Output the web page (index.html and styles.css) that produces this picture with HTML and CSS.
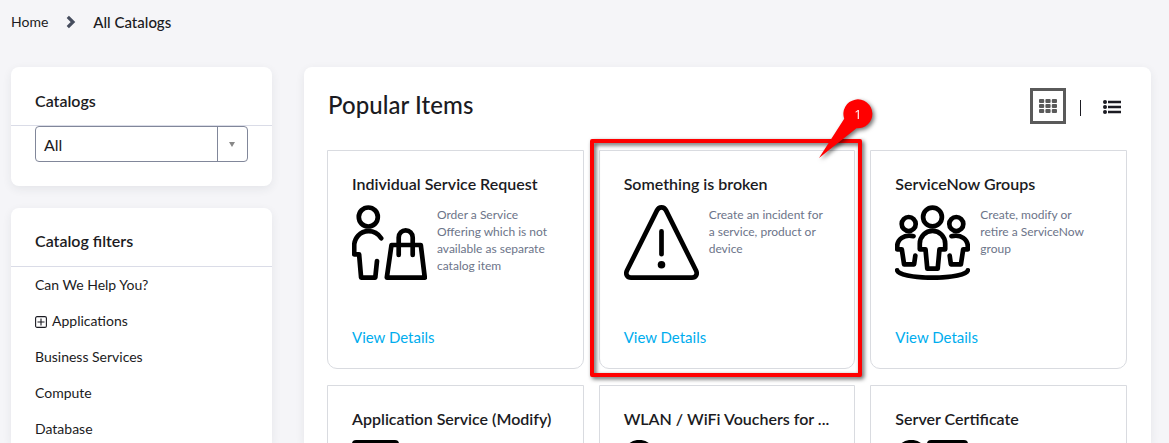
FILE: index.html
```html
<!DOCTYPE html>
<html lang="en">
<head>
<meta charset="utf-8">
<title>All Catalogs</title>
<link rel="stylesheet" href="styles.css">
</head>
<body>
<nav class="breadcrumb">
  <a class="crumb">Home</a>
  <svg class="crumb-arrow" width="10" height="14" viewBox="0 0 10 14"><path d="M1.8 1.8l5.2 5.2-5.2 5.2"/></svg>
  <span class="crumb-current">All Catalogs</span>
</nav>
<div class="layout">
  <aside class="sidebar">
    <section class="panel catalogs">
      <h2 class="panel-title">Catalogs</h2>
      <div class="select"><span class="select-value">All</span><span class="select-toggle"><svg width="6" height="5" viewBox="0 0 6 5"><path d="M0 0h6L3 5z"/></svg></span></div>
    </section>
    <section class="panel filters">
      <h2 class="panel-title">Catalog filters</h2>
      <ul class="filter-list">
        <li>Can We Help You?</li>
        <li><svg class="expand" width="12" height="12" viewBox="0 0 12 12"><rect x=".6" y=".6" width="10.8" height="10.8" rx="1.5"/><path d="M6 2.5v7M2.5 6h7"/></svg>Applications</li>
        <li>Business Services</li>
        <li>Compute</li>
        <li>Database</li>
      </ul>
    </section>
  </aside>
  <main class="panel popular">
    <header class="popular-head">
      <h1 class="popular-title">Popular Items</h1>
      <div class="views">
        <span class="view-grid"><svg width="18" height="14" viewBox="0 0 18 14"><g><rect width="5.2" height="4" rx="1"/><rect x="6.4" width="5.2" height="4" rx="1"/><rect x="12.8" width="5.2" height="4" rx="1"/><rect y="5" width="5.2" height="4" rx="1"/><rect x="6.4" y="5" width="5.2" height="4" rx="1"/><rect x="12.8" y="5" width="5.2" height="4" rx="1"/><rect y="10" width="5.2" height="4" rx="1"/><rect x="6.4" y="10" width="5.2" height="4" rx="1"/><rect x="12.8" y="10" width="5.2" height="4" rx="1"/></g></svg></span>
        <span class="view-divider"></span>
        <svg class="view-list" width="18" height="14" viewBox="0 0 18 14"><circle cx="2" cy="2" r="2"/><circle cx="2" cy="7" r="2"/><circle cx="2" cy="12" r="2"/><path d="M5 .7h13v2.6H5zM5 5.7h13v2.6H5zM5 10.7h13v2.6H5z"/></svg>
      </div>
    </header>
    <div class="cards">
      <article class="card">
        <h3 class="card-title">Individual Service Request</h3>
        <div class="card-body">
          <svg class="card-icon" viewBox="0 0 75 75"><circle cx="16.3" cy="12" r="9.5"/><path d="M29.2 33.2C26 28.5 21.5 26.2 16.5 26.2 8 26.2 2.2 33 2.2 41v8.3h4.9l2 23.3h14.2l1.7-16.6M39.5 40h29.3l4 32.6H34.8zM46.7 50V32.5a7 7.2 0 0 1 14 0V50"/></svg>
          <p class="card-text">Order a Service Offering which is not available as separate catalog item</p>
        </div>
        <a class="card-link">View Details</a>
      </article>
      <article class="card">
        <h3 class="card-title">Something is broken</h3>
        <div class="card-body">
          <svg class="card-icon" viewBox="0 0 75 75"><path d="M33 5.4L3.1 65.3C1 69.5 3.4 72.6 7 72.6h61c3.6 0 6-3.1 3.9-7.3L42 5.4c-2-4-7-4-9 0zM37.5 26.3v22.9"/><circle class="solid" cx="37.5" cy="59.7" r="3.8"/></svg>
          <p class="card-text">Create an incident for a service, product or device</p>
        </div>
        <a class="card-link">View Details</a>
        <div class="highlight"></div>
        <svg class="callout" width="70" height="72" viewBox="0 0 70 72"><path d="M8 67L33.2 27.7A14.5 14.5 0 1 1 45.5 37.3z"/><text x="47" y="28">1</text></svg>
      </article>
      <article class="card">
        <h3 class="card-title">ServiceNow Groups</h3>
        <div class="card-body">
          <svg class="card-icon" viewBox="0 0 75 75"><circle cx="37.5" cy="12" r="9.4"/><circle cx="13.7" cy="19" r="7"/><circle cx="61.3" cy="19" r="7"/><path d="M24.8 44.3v-5.5a12.7 12.9 0 0 1 25.4 0v5.5h-5.7l-1.8 19.4h-10.4l-1.8-19.4zM18.5 31.2C9 28.8 2.2 34.5 2.2 41.5v2.8H6.8l2.3 15h10l1.2-8.6M56.5 31.2C66 28.8 72.8 34.5 72.8 41.5v2.8H68.2l-2.3 15h-10l-1.2-8.6M2.2 65.3c0 4 15.8 7.4 35.3 7.4s35.3-3.4 35.3-7.4"/></svg>
          <p class="card-text">Create, modify or retire a ServiceNow group</p>
        </div>
        <a class="card-link">View Details</a>
      </article>
      <article class="card">
        <h3 class="card-title">Application Service (Modify)</h3>
        <div class="card-body"><svg class="card-icon" viewBox="0 0 75 75"><rect class="solid" width="47" height="30" rx="4"/></svg></div>
      </article>
      <article class="card">
        <h3 class="card-title">WLAN / WiFi Vouchers for ...</h3>
        <div class="card-body"><svg class="card-icon" viewBox="0 0 75 75"><circle cx="15.2" cy="16" r="13.8"/></svg></div>
      </article>
      <article class="card">
        <h3 class="card-title">Server Certificate</h3>
        <div class="card-body"><svg class="card-icon" viewBox="0 0 75 75"><circle cx="16.3" cy="16" r="13.8"/><rect class="solid" x="32" width="41" height="30" rx="4"/></svg></div>
      </article>
    </div>
  </main>
</div>
</body>
</html>
```
FILE: styles.css
```css
* { box-sizing: border-box; }
html { height: 100%; overflow: hidden; }
body {
  display: flex;
  flex-direction: column;
  margin: 0;
  height: 100%;
  overflow: hidden;
  background: #f5f5f8;
  color: #1b1b22;
  font-family: Lato, sans-serif;
  font-size: 14px;
}
h1, h2, h3, p, ul { margin: 0; padding: 0; }
.breadcrumb {
  display: flex;
  flex: none;
  align-items: center;
  height: 43px;
  padding-left: 11px;
}
.crumb-arrow { margin: 0 17px 0 18px; fill: none; stroke: #464d5e; stroke-width: 3.2; }
.crumb-current { font-size: 15px; font-weight: 500; }
.layout {
  display: flex;
  flex: 1;
  min-height: 0;
  gap: 32px;
  padding: 24px 18px 0 11px;
}
.sidebar { display: flex; flex: none; flex-direction: column; gap: 22px; width: 261px; }
.panel {
  background: #fff;
  border-radius: 8px;
  box-shadow: 0 3px 10px rgba(40, 50, 70, .08);
}
.catalogs { flex: none; height: 119px; }
.filters {
  flex: 1;
  min-height: 0;
  border-radius: 8px 8px 0 0;
}
.panel-title {
  height: 59px;
  padding: 10px 24px 0;
  border-bottom: 1px solid #dadce7;
  font-size: 16px;
  font-weight: 600;
  line-height: 48px;
}
.filters .panel-title { line-height: 46px; }
.select {
  display: flex;
  width: 213px;
  height: 36px;
  margin-left: 24px;
  border: 1px solid #81879a;
  border-radius: 4px;
}
.select-value { flex: 1; padding-left: 8px; font-size: 16px; line-height: 36px; }
.select-toggle {
  display: flex;
  align-items: center;
  justify-content: center;
  width: 30px;
  padding-right: 1px;
  border-left: 1px solid #81879a;
}
.select-toggle svg { fill: #888; }
.filter-list { list-style: none; }
.filter-list li {
  display: flex;
  align-items: center;
  height: 36px;
  padding: 0 0 2px 24px;
}
.expand { margin-right: 5px; margin-top: 3px; fill: none; stroke: #1b1b22; stroke-width: 1.1; }
.popular {
  flex: 1;
  min-width: 0;
  padding: 21px 24px 0 23px;
  border-radius: 8px 8px 0 0;
}
.popular-head { display: flex; justify-content: space-between; height: 62px; }
.popular-title { padding-left: 1px; font-size: 24px; font-weight: 500; letter-spacing: .06px; line-height: 34px; }
.views { display: flex; align-items: center; height: 36px; padding-right: 6px; }
.view-grid {
  display: flex;
  align-items: center;
  justify-content: center;
  width: 36px;
  height: 36px;
  border: 3px solid #5a5a5a;
  fill: #5a5a5a;
}
.view-divider { width: 1px; height: 16px; margin: 3px 22px 0 14px; background: #1b1b22; }
.view-list { fill: #1b1b22; margin-top: 1px; }
.cards {
  display: grid;
  grid-template-columns: repeat(3, minmax(0, 1fr));
  grid-auto-rows: 219px;
  gap: 16px 15px;
  height: 293px;
  overflow: clip;
  overflow-clip-margin: 70px;
}
.card {
  position: relative;
  display: flex;
  flex-direction: column;
  padding: 24px 24px 0;
  border: 1px solid #d9dbe0;
  border-radius: 0 0 10px 10px;
}
.card-title { font-size: 16px; font-weight: 600; line-height: 20px; margin-top: -1px; white-space: nowrap; }
.card-body { display: flex; gap: 10px; height: 75px; margin-top: 11px; }
.card-icon {
  flex: none;
  width: 75px;
  height: 75px;
  fill: none;
  stroke: #000;
  stroke-width: 4.7;
  stroke-linecap: round;
  stroke-linejoin: round;
}
.card-icon .solid { fill: #000; stroke: none; }
.card-text { flex: 1; min-width: 0; margin-top: 1px; color: #6c7489; font-size: 12px; line-height: 17px; }
.card-link { margin-top: 47px; color: #00adee; font-size: 15px; line-height: 20px; }
.highlight {
  position: absolute;
  left: -10px;
  top: -12px;
  width: 272px;
  height: 238px;
  border: 4px solid #f00;
  border-radius: 2px;
  filter: drop-shadow(2px 2px 2px rgba(0, 0, 0, .65));
}
.callout {
  position: absolute;
  left: 211px;
  top: -60px;
  overflow: visible;
  fill: #f00;
  filter: drop-shadow(2px 2px 2px rgba(0, 0, 0, .55));
}
.callout text { fill: #fff; font-family: "Open Sans", sans-serif; font-size: 13px; text-anchor: middle; }
```
